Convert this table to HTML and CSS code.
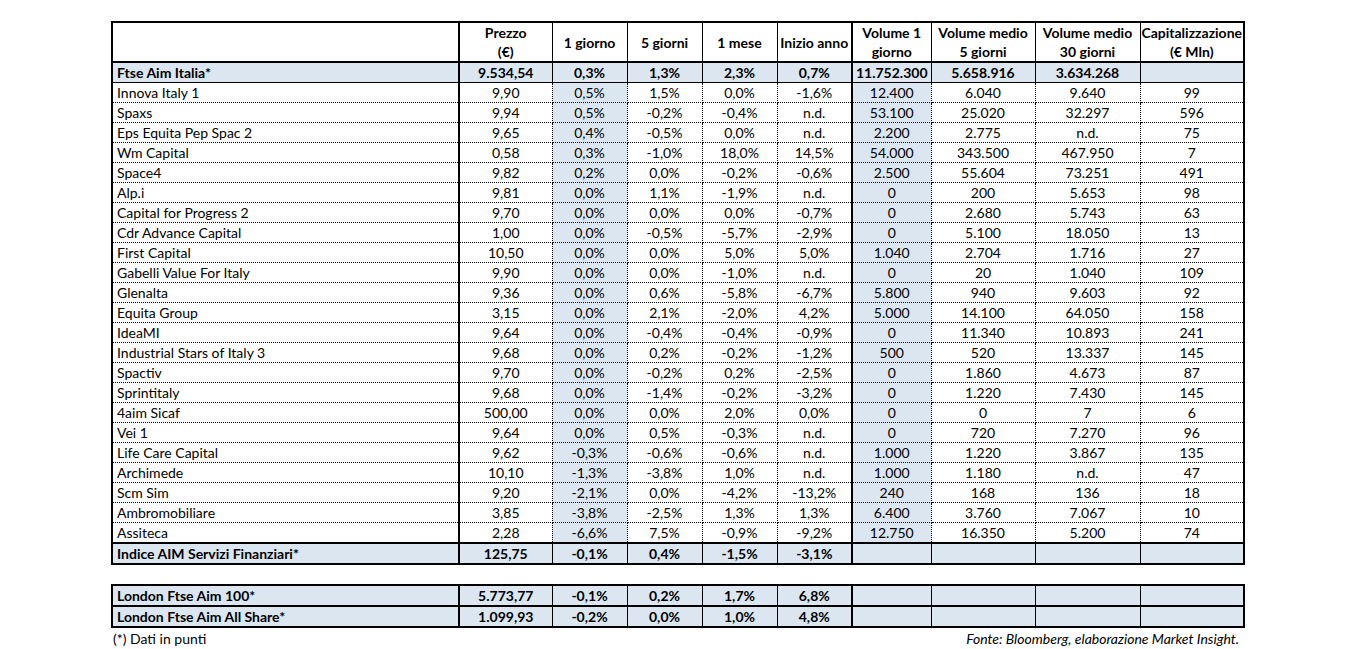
FILE: index.html
```html
<!DOCTYPE html>
<html lang="it">
<head>
<meta charset="utf-8">
<title>AIM Servizi Finanziari</title>
<link rel="stylesheet" href="styles.css">
</head>
<body>
<div class="page">
<table class="grid main">
<colgroup>
<col class="c-name"><col class="c-price"><col class="c-p"><col class="c-p"><col class="c-p"><col class="c-p"><col class="c-v1"><col class="c-v5"><col class="c-v30"><col class="c-cap">
</colgroup>
<thead>
<tr class="head">
<th class="name"></th><th>Prezzo<br>(€)</th><th>1 giorno</th><th>5 giorni</th><th>1 mese</th><th class="ya">Inizio anno</th><th>Volume 1<br>giorno</th><th>Volume medio<br>5 giorni</th><th>Volume medio<br>30 giorni</th><th>Capitalizzazione<br>(€ Mln)</th>
</tr>
</thead>
<tbody>
<tr class="index top"><td class="name">Ftse Aim Italia*</td><td>9.534,54</td><td>0,3%</td><td>1,3%</td><td>2,3%</td><td class="ya">0,7%</td><td>11.752.300</td><td>5.658.916</td><td>3.634.268</td><td></td></tr>
<tr><td class="name">Innova Italy 1</td><td>9,90</td><td class="b">0,5%</td><td>1,5%</td><td>0,0%</td><td class="ya">-1,6%</td><td class="b">12.400</td><td>6.040</td><td>9.640</td><td>99</td></tr>
<tr><td class="name">Spaxs</td><td>9,94</td><td class="b">0,5%</td><td>-0,2%</td><td>-0,4%</td><td class="ya">n.d.</td><td class="b">53.100</td><td>25.020</td><td>32.297</td><td>596</td></tr>
<tr><td class="name">Eps Equita Pep Spac 2</td><td>9,65</td><td class="b">0,4%</td><td>-0,5%</td><td>0,0%</td><td class="ya">n.d.</td><td class="b">2.200</td><td>2.775</td><td>n.d.</td><td>75</td></tr>
<tr><td class="name">Wm Capital</td><td>0,58</td><td class="b">0,3%</td><td>-1,0%</td><td>18,0%</td><td class="ya">14,5%</td><td class="b">54.000</td><td>343.500</td><td>467.950</td><td>7</td></tr>
<tr><td class="name">Space4</td><td>9,82</td><td class="b">0,2%</td><td>0,0%</td><td>-0,2%</td><td class="ya">-0,6%</td><td class="b">2.500</td><td>55.604</td><td>73.251</td><td>491</td></tr>
<tr><td class="name">Alp.i</td><td>9,81</td><td class="b">0,0%</td><td>1,1%</td><td>-1,9%</td><td class="ya">n.d.</td><td class="b">0</td><td>200</td><td>5.653</td><td>98</td></tr>
<tr><td class="name">Capital for Progress 2</td><td>9,70</td><td class="b">0,0%</td><td>0,0%</td><td>0,0%</td><td class="ya">-0,7%</td><td class="b">0</td><td>2.680</td><td>5.743</td><td>63</td></tr>
<tr><td class="name">Cdr Advance Capital</td><td>1,00</td><td class="b">0,0%</td><td>-0,5%</td><td>-5,7%</td><td class="ya">-2,9%</td><td class="b">0</td><td>5.100</td><td>18.050</td><td>13</td></tr>
<tr><td class="name">First Capital</td><td>10,50</td><td class="b">0,0%</td><td>0,0%</td><td>5,0%</td><td class="ya">5,0%</td><td class="b">1.040</td><td>2.704</td><td>1.716</td><td>27</td></tr>
<tr><td class="name">Gabelli Value For Italy</td><td>9,90</td><td class="b">0,0%</td><td>0,0%</td><td>-1,0%</td><td class="ya">n.d.</td><td class="b">0</td><td>20</td><td>1.040</td><td>109</td></tr>
<tr><td class="name">Glenalta</td><td>9,36</td><td class="b">0,0%</td><td>0,6%</td><td>-5,8%</td><td class="ya">-6,7%</td><td class="b">5.800</td><td>940</td><td>9.603</td><td>92</td></tr>
<tr><td class="name">Equita Group</td><td>3,15</td><td class="b">0,0%</td><td>2,1%</td><td>-2,0%</td><td class="ya">4,2%</td><td class="b">5.000</td><td>14.100</td><td>64.050</td><td>158</td></tr>
<tr><td class="name">IdeaMI</td><td>9,64</td><td class="b">0,0%</td><td>-0,4%</td><td>-0,4%</td><td class="ya">-0,9%</td><td class="b">0</td><td>11.340</td><td>10.893</td><td>241</td></tr>
<tr><td class="name">Industrial Stars of Italy 3</td><td>9,68</td><td class="b">0,0%</td><td>0,2%</td><td>-0,2%</td><td class="ya">-1,2%</td><td class="b">500</td><td>520</td><td>13.337</td><td>145</td></tr>
<tr><td class="name">Spactiv</td><td>9,70</td><td class="b">0,0%</td><td>-0,2%</td><td>0,2%</td><td class="ya">-2,5%</td><td class="b">0</td><td>1.860</td><td>4.673</td><td>87</td></tr>
<tr><td class="name">Sprintitaly</td><td>9,68</td><td class="b">0,0%</td><td>-1,4%</td><td>-0,2%</td><td class="ya">-3,2%</td><td class="b">0</td><td>1.220</td><td>7.430</td><td>145</td></tr>
<tr><td class="name">4aim Sicaf</td><td>500,00</td><td class="b">0,0%</td><td>0,0%</td><td>2,0%</td><td class="ya">0,0%</td><td class="b">0</td><td>0</td><td>7</td><td>6</td></tr>
<tr><td class="name">Vei 1</td><td>9,64</td><td class="b">0,0%</td><td>0,5%</td><td>-0,3%</td><td class="ya">n.d.</td><td class="b">0</td><td>720</td><td>7.270</td><td>96</td></tr>
<tr><td class="name">Life Care Capital</td><td>9,62</td><td class="b">-0,3%</td><td>-0,6%</td><td>-0,6%</td><td class="ya">n.d.</td><td class="b">1.000</td><td>1.220</td><td>3.867</td><td>135</td></tr>
<tr><td class="name">Archimede</td><td>10,10</td><td class="b">-1,3%</td><td>-3,8%</td><td>1,0%</td><td class="ya">n.d.</td><td class="b">1.000</td><td>1.180</td><td>n.d.</td><td>47</td></tr>
<tr><td class="name">Scm Sim</td><td>9,20</td><td class="b">-2,1%</td><td>0,0%</td><td>-4,2%</td><td class="ya">-13,2%</td><td class="b">240</td><td>168</td><td>136</td><td>18</td></tr>
<tr><td class="name">Ambromobiliare</td><td>3,85</td><td class="b">-3,8%</td><td>-2,5%</td><td>1,3%</td><td class="ya">1,3%</td><td class="b">6.400</td><td>3.760</td><td>7.067</td><td>10</td></tr>
<tr><td class="name">Assiteca</td><td>2,28</td><td class="b">-6,6%</td><td>7,5%</td><td>-0,9%</td><td class="ya">-9,2%</td><td class="b">12.750</td><td>16.350</td><td>5.200</td><td>74</td></tr>
<tr class="index bottom"><td class="name">Indice AIM Servizi Finanziari*</td><td>125,75</td><td>-0,1%</td><td>0,4%</td><td>-1,5%</td><td class="ya">-3,1%</td><td></td><td></td><td></td><td></td></tr>
</tbody>
</table>

<table class="grid london">
<colgroup>
<col class="c-name"><col class="c-price"><col class="c-p"><col class="c-p"><col class="c-p"><col class="c-p"><col class="c-v1"><col class="c-v5"><col class="c-v30"><col class="c-cap">
</colgroup>
<tbody>
<tr class="index"><td class="name">London Ftse Aim 100*</td><td>5.773,77</td><td>-0,1%</td><td>0,2%</td><td>1,7%</td><td class="ya">6,8%</td><td></td><td></td><td></td><td></td></tr>
<tr class="index"><td class="name">London Ftse Aim All Share*</td><td>1.099,93</td><td>-0,2%</td><td>0,0%</td><td>1,0%</td><td class="ya">4,8%</td><td></td><td></td><td></td><td></td></tr>
</tbody>
</table>

<div class="foot">
<span class="note">(*) Dati in punti</span>
<span class="source">Fonte: Bloomberg, elaborazione Market Insight.</span>
</div>
</div>
</body>
</html>
```

FILE: styles.css
```css
html, body {
  margin: 0;
  padding: 0;
  background: #ffffff;
}

body {
  font-family: Lato, "Open Sans", "Liberation Sans", sans-serif;
  font-size: 14px;
  color: #000;
}

.page {
  padding: 21px 0 0 111px;
  width: 1132px;
}

.grid {
  border-collapse: collapse;
  table-layout: fixed;
  width: 1132px;
  border: 2px solid #000;
}

.c-name { width: 347px; }
.c-price { width: 93px; }
.c-p { width: 75px; }
.c-v1 { width: 79px; }
.c-v5 { width: 104px; }
.c-v30 { width: 105px; }
.c-cap { width: 104px; }

.grid td,
.grid th {
  padding: 0;
  text-align: center;
  vertical-align: middle;
  white-space: nowrap;
  overflow: visible;
  line-height: 19px;
  height: 19px;
  border: 1px dotted #000;
}

.grid .name {
  text-align: left;
  padding-left: 4px;
  border-right: 2px solid #000;
}

.grid .ya {
  border-right: 2px solid #000;
}

.head th {
  font-weight: bold;
  height: 35px;
  line-height: 19px;
  border: 1px solid #000;
  border-top: 2px solid #000;
  border-bottom: 2px solid #000;
  background: #fff;
}

.head th.name,
.head th.ya {
  border-right: 2px solid #000;
}

.grid td.b {
  background: #dce6f1;
}

.index td {
  background: #dce6f1;
  font-weight: bold;
  border-left: 1px solid #000;
  border-right: 1px solid #000;
}

.index td.name,
.index td.ya {
  border-right: 2px solid #000;
}

.main .top td {
  height: 19px;
  border-bottom: 1px solid #000;
}

.main .bottom td {
  height: 18px;
  border-top: 2px solid #000;
  border-bottom: 2px solid #000;
}

.london {
  margin-top: 19px;
}

.london .index td {
  height: 18px;
  border-top: 2px solid #000;
  border-bottom: 2px solid #000;
}

.foot {
  display: flex;
  justify-content: space-between;
  align-items: center;
  height: 20px;
  padding: 0 4px 0 2px;
}

.source {
  font-style: italic;
}
```
